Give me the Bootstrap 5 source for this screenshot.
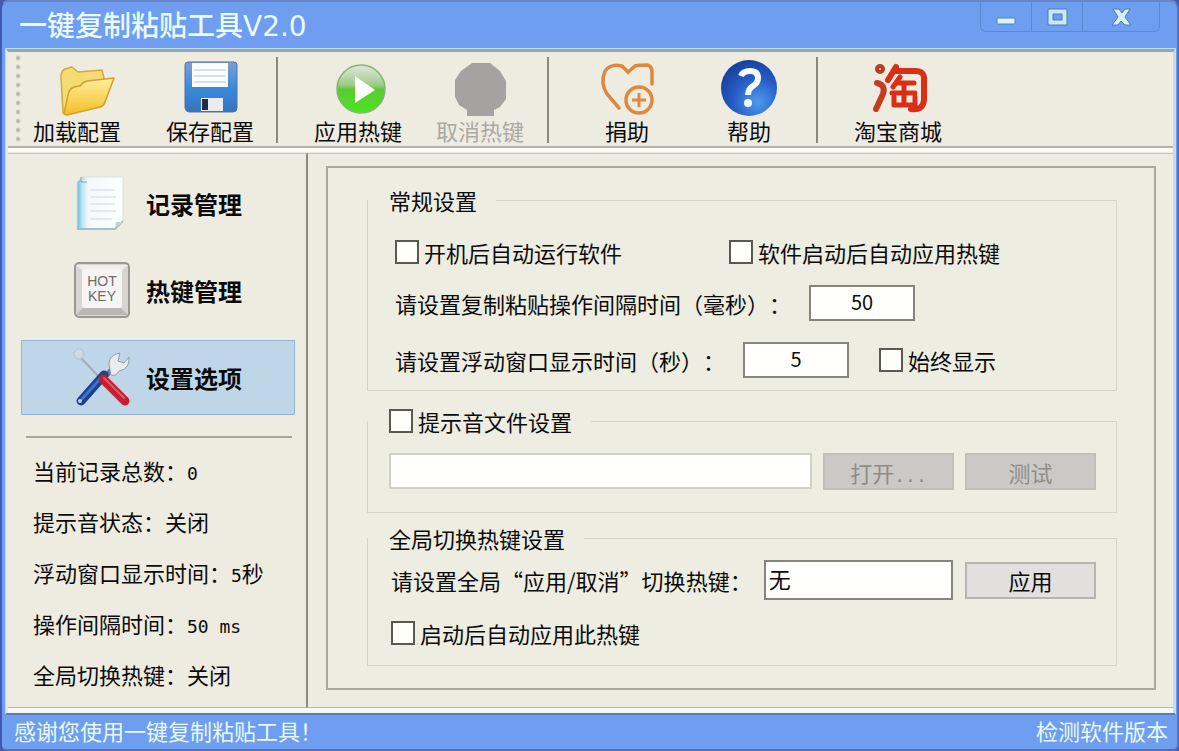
<!DOCTYPE html>
<html lang="zh-CN">
<head>
<meta charset="utf-8">
<meta name="viewport" content="width=device-width, initial-scale=1">
<title>一键复制粘贴工具V2.0</title>
<link rel="stylesheet" href="https://cdn.jsdelivr.net/npm/bootstrap@5.3.0/dist/css/bootstrap.min.css">
<style>
:root { --face: #eeece1; --blue: #6f9ef1; --line: #a3a298; --faint: #d6d6c8; }
body { background: #3f5fae; color: #0b0b0b; font-family: "Noto Sans CJK SC", "Liberation Sans", sans-serif; font-size: 22px; line-height: 28px; font-kerning: none; text-spacing-trim: space-all; }
.app-window { background: var(--blue); border: 2px solid #5470b4; border-left-color: #405ab0; border-top-color: #6686c8; border-radius: 8px 8px 6px 6px; padding: 0 2px 0 4px; }
.title-bar { height: 47px; }
.title-text { font: 500 28px/36px "DejaVu Sans", "Noto Sans CJK SC", sans-serif; color: #e9fbfb; margin: 7px 0 0 13px; }
.caption-box { height: 30px; margin-right: 15px; border: 1px solid #5d88cd; border-top: 0; border-radius: 0 0 6px 6px; }
.caption-box button { width: 51px; border: 0; border-right: 1px solid #5d88cd; background: none; padding: 0; line-height: 0; }
.caption-box button:last-child { width: 76px; border-right: 0; }
.client { background: var(--face); border: 2px solid #8ea6bb; border-top-width: 3px; border-left-color: #dfeafa; border-right-color: #c3dcec; border-bottom: 0; outline: 1px solid #c4ddf5; }
.tool-bar { height: 96px; border-bottom: 2px solid #b5b1a6; box-shadow: 0 4px 0 #fbfaf3; margin-bottom: 5px; }
.grip { width: 5px; margin: 3px 0 3px 8px; background: radial-gradient(circle at 2px 3px, #b9b6ae 1px, transparent 3px) 0 0 / 5px 9px; }
.tool-group { border-right: 2px solid #8b897f; margin: 5px 0 3px; padding: 0 6px 0 19px; }
.tool-group.tight { padding: 0 10px 0 0; gap: 21px; }
.tool-group:last-child { border-right: 0; }
.tool-item { width: 122px; border: 0; background: none; padding: 0; color: #0b0b0b; }
.tight .tool-item { width: 112px; }
.tool-item svg { display: block; width: 60px; height: 60px; margin: 0 auto; overflow: visible; }
.tool-item span { display: block; line-height: 24px; }
.tool-item:disabled { color: #aaa9a2; }
.side-bar { width: 300px; border-right: 2px solid #8d8a80; border-top: 1px solid #c8c4b8; padding: 12px 11px 0 13px; }
.side-link { height: 75px; padding-left: 50px; gap: 14px; border: 1px solid transparent; color: #0b0b0b; font-size: 24px; font-weight: 700; text-decoration: none; }
.side-link.active { background: #bfd6e9; border-color: #93b6d8; }
.side-link svg { width: 60px; height: 60px; flex: none; }
.side-rule { border: 0; border-top: 2px solid #aaa69c; opacity: 1; margin: 21px 3px 18px 5px; }
.stat-list { padding-left: 12px; gap: 23px; }
.stat-list > div { height: 28px; }
.num { font-family: "DejaVu Sans Mono", monospace; font-size: 18px; line-height: 20px; }
.main-area { border-top: 1px solid #c8c4b8; padding: 12px 17px 17px 18px; }
.pane { border: 2px solid #a8a89b; background: #edede1; padding: 18px 37px 21px 39px; }
.set-group { border: 1px solid var(--faint); padding: 0 20px 0 21px; min-width: 0; }
.set-group > legend { float: none; width: auto; margin: 0 0 0 -21px; padding: 0 19px 0 21px; font-size: 22px; line-height: 28px; }
.tick { appearance: none; width: 24px; height: 24px; margin: 0; flex: none; border: 2px solid #5a5950; background: #fffffa; }
.tick:checked { background: #5a5950; box-shadow: inset 0 0 0 4px #fffffa; }
.tick-label { display: flex; align-items: center; gap: 5px; line-height: 24px; }
.field { border: 2px solid #85857d; background: #fffffd; height: 36px; min-width: 0; padding: 0 4px 4px; color: #0b0b0b; border-radius: 0; }
.field.short { width: 106px; text-align: center; font-size: 20px; }
.field.soft { border-color: #d0d0c8; }
.field.tall { height: 40px; padding-left: 3px; }
.push { width: 131px; height: 37px; flex: none; border: 2px solid #b5b4b0; background: #e2e0df; padding: 0; line-height: 30px; color: #0b0b0b; }
.push:disabled { background: #cbc9c5; border-color: #c0bfba; color: #8d8c88; }
.two-ticks { display: grid; grid-template-columns: 334px 1fr; }
.status-bar { height: 36px; border-top: 2px solid #5c7cb5; color: #e6faf3; padding: 0 7px 0 8px; line-height: 30px; }
.status-bar a { color: inherit; text-decoration: none; }
.base-line { height: 6px; border-top: 1px solid #b9b5ab; background: #f7f7f5; }
</style>
</head>
<body>
<div class="app-window d-flex flex-column min-vh-100">
  <header class="title-bar d-flex justify-content-between align-items-start">
    <h1 class="title-text">一键复制粘贴工具V2.0</h1>
    <div class="caption-box d-flex">
      <button type="button" aria-label="最小化"><svg width="24" height="24"><rect x="3" y="13" width="18" height="6" rx="1" fill="#d8f5fb" stroke="#5584bd"/></svg></button>
      <button type="button" aria-label="最大化"><svg width="24" height="24"><path d="M3 4h19v16H3zM8 9v6h9V9z" fill="#c7eaf7" stroke="#4c7bb3" fill-rule="evenodd"/></svg></button>
      <button type="button" aria-label="关闭"><svg width="24" height="24"><path d="M4 4h6l3 4 3-4h5l-5 8 6 8h-6l-4-4-3 4H3l6-8z" fill="#d3f1fa" stroke="#4c7bb3"/></svg></button>
    </div>
  </header>

  <div class="client d-flex flex-column flex-grow-1">
    <nav class="tool-bar d-flex">
      <div class="grip"></div>
      <div class="tool-group tight d-flex">
        <button class="tool-item" type="button">
          <svg viewBox="-10 -3 60 60"><defs><linearGradient id="fo" x2="0" y2="1"><stop offset="0" stop-color="#fff0a0"/><stop offset="1" stop-color="#f3bf22"/></linearGradient></defs><path d="M6 52 4 16q0-6 4-8l7-2 6 5 24-2 2 8v22z" fill="#f5dc72" stroke="#d4a83b" stroke-width="1.5" stroke-linejoin="round"/><path d="M7 53 11 34q1-6 6-8l6-1q3-4 7-5l27-3-9 24q-1 4-5 5L10 54z" fill="url(#fo)" stroke="#cfa02d" stroke-width="1.5" stroke-linejoin="round"/></svg>
          <span>加载配置</span>
        </button>
        <button class="tool-item" type="button">
          <svg viewBox="0 0 60 60"><defs><linearGradient id="fl" x2="0" y2="1"><stop offset="0" stop-color="#7f9fd2"/><stop offset=".5" stop-color="#3a8bdc"/><stop offset="1" stop-color="#3475bd"/></linearGradient></defs><path d="M8 4h46q3 0 3 3v43q0 4-4 4H10q-5 0-5-5V7q0-3 3-3z" fill="url(#fl)" stroke="#566e9d"/><path d="M12 5h36v24H12z" fill="#fbfdfe"/><path d="M14 12h32M14 18h32M14 24h32" stroke="#d9e0e9" stroke-width="2"/><path d="M21 40h22v13H21z" fill="#e9edf0"/><path d="M22 41h6v11h-6z" fill="#222c3c"/></svg>
          <span>保存配置</span>
        </button>
      </div>
      <div class="tool-group d-flex">
        <button class="tool-item" type="button">
          <svg viewBox="0 0 60 60"><defs><linearGradient id="gr" x2="0" y2="1"><stop offset="0" stop-color="#e4e7dc"/><stop offset=".42" stop-color="#9ccc87"/><stop offset=".5" stop-color="#5ccb35"/><stop offset="1" stop-color="#48e51d"/></linearGradient></defs><circle cx="33" cy="31" r="24" fill="url(#gr)" stroke="#84b573" stroke-width="1.5"/><path d="M27 18v27l20-13z" fill="#fff"/></svg>
          <span>应用热键</span>
        </button>
        <button class="tool-item" type="button" disabled>
          <svg viewBox="0 0 60 60"><path d="M22 5h18l10 8 6 10v18l-6 8-6 3v6H17v-6l-8-5-4-8V22l6-9z" fill="#a4a3a1"/></svg>
          <span>取消热键</span>
        </button>
      </div>
      <div class="tool-group d-flex" style="padding-left:17px">
        <button class="tool-item" type="button">
          <svg viewBox="0 0 60 60" fill="none" stroke="#df873f" stroke-width="3.5"><path d="M22 50 10 36Q3 25 8 13 14 5 25 8L31 14 38 8Q42 7 50 7 55 8 55 14V26" stroke-linecap="round"/><circle cx="42" cy="42" r="13"/><path d="M42 35v14M35 42h14" stroke-width="3"/></svg>
          <span>捐助</span>
        </button>
        <button class="tool-item" type="button">
          <svg viewBox="0 0 60 60"><defs><radialGradient id="he" cx=".65" cy=".75" r=".8"><stop offset="0" stop-color="#4c9bee"/><stop offset=".55" stop-color="#245bc4"/><stop offset="1" stop-color="#173f9c"/></radialGradient></defs><circle cx="30" cy="30" r="28" fill="url(#he)"/><path d="M22 18Q24 13 31 13q8 0 8 7 0 5-5 8-5 3-5 9" fill="none" stroke="#f5fafc" stroke-width="6"/><circle cx="29" cy="45" r="4" fill="#f5fafc"/></svg>
          <span>帮助</span>
        </button>
      </div>
      <div class="tool-group d-flex">
        <button class="tool-item" type="button">
          <svg viewBox="-2 0 60 60" aria-hidden="true" fill="none" stroke="#dc2e17" stroke-width="6" stroke-linecap="round" stroke-linejoin="round"><circle cx="10" cy="11" r="2" stroke="#bd3b20"/><path d="M7 25q9 2 6 11L6 51" stroke="#c53b22"/><path d="M26 9 18 22M24 13h21q10 0 9 9v20q-1 11-13 9"/><path d="M30 19 23 29M27 25h17M22 35h23M34 26v21M24 39v8h21v-8" stroke-width="5"/></svg>
          <span>淘宝商城</span>
        </button>
      </div>
    </nav>

    <div class="d-flex flex-grow-1">
      <aside class="side-bar flex-shrink-0">
        <nav class="d-flex flex-column" style="gap:12px">
          <a class="side-link d-flex align-items-center" href="#records">
            <svg viewBox="0 0 60 60"><defs><linearGradient id="pg"><stop offset="0" stop-color="#69badb"/><stop offset=".12" stop-color="#bce8f2"/><stop offset=".25" stop-color="#f4f8fd"/><stop offset="1" stop-color="#fff"/></linearGradient></defs><path d="M5 8 10 3h41v44l-8 8H5z" fill="url(#pg)" stroke="#d5e1e4"/><path d="M5 55h38l8-8" fill="none" stroke="#8db4c3" stroke-width="1.5"/><path d="m43 54 1-6h7z" fill="#c6d3d5"/><path d="M18 16h25M18 23h26M18 30h25M18 37h26M18 45h22" stroke="#e3e8f2" stroke-width="2"/><path d="M9 3v5h6" fill="none" stroke="#8aa0a5"/></svg>
            <span>记录管理</span>
          </a>
          <a class="side-link d-flex align-items-center" href="#hotkeys">
            <svg viewBox="0 0 60 60"><rect x="3" y="2" width="54" height="54" rx="4" fill="#d6d5d1" stroke="#999893" stroke-width="2"/><path d="m4 4 8 7h36l8-7z" fill="#efeeeb"/><path d="m4 54 8-8h36l8 8z" fill="#b9b8b4"/><rect x="10" y="8" width="40" height="39" rx="2" fill="#f6f5f3"/><g font-family="Liberation Sans" font-weight="400" font-size="14" fill="#6c6c6c" text-anchor="middle"><text x="30" y="25">HOT</text><text x="30" y="40">KEY</text></g></svg>
            <span>热键管理</span>
          </a>
          <a class="side-link active d-flex align-items-center" href="#options" aria-current="page">
            <svg viewBox="0 0 60 60" stroke-linecap="round"><path d="m6 7 24 25" stroke="#9fafbb" stroke-width="2"/><circle cx="7" cy="6" r="5" fill="#ccdbe6" stroke="#b3c3cf"/><path d="m32 30 11-12" stroke="#697485" stroke-width="5"/><path d="M37 15q0-8 11-10l-2 8 6 2 5-6q1 12-10 14-3 6-8 4z" fill="#e8ecec" stroke="#8d9da6"/><path d="M32 27 9 53" stroke="#1e408d" stroke-width="9"/><path d="M28 31 10 51" stroke="#3d73cb" stroke-width="3"/><circle cx="8" cy="53" r="2" fill="#b8d0e6"/><path d="m31 31 22 22" stroke="#c21f30" stroke-width="9"/><path d="m32 30 20 20" stroke="#f15360" stroke-width="2"/></svg>
            <span>设置选项</span>
          </a>
        </nav>
        <hr class="side-rule">
        <div class="stat-list d-flex flex-column">
          <div>当前记录总数：<span class="num">0</span></div>
          <div>提示音状态：关闭</div>
          <div>浮动窗口显示时间：<span class="num">5</span>秒</div>
          <div>操作间隔时间：<span class="num">50 ms</span></div>
          <div>全局切换热键：关闭</div>
        </div>
      </aside>

      <main class="main-area flex-grow-1 d-flex flex-column">
        <form class="pane flex-grow-1">
          <fieldset class="set-group" style="margin-bottom:18px">
            <legend>常规设置</legend>
            <div class="d-flex flex-column" style="gap:21px;padding:26px 0 12px 6px">
              <div class="two-ticks">
                <label class="tick-label"><input class="tick" type="checkbox">开机后自动运行软件</label>
                <label class="tick-label"><input class="tick" type="checkbox">软件启动后自动应用热键</label>
              </div>
              <div class="d-flex align-items-center" style="gap:18px">
                <label for="delay">请设置复制粘贴操作间隔时间（毫秒）：</label>
                <input class="field short" id="delay" type="text" value="50">
              </div>
              <div class="d-flex align-items-center" style="gap:18px">
                <label for="float">请设置浮动窗口显示时间（秒）：</label>
                <input class="field short" id="float" type="text" value="5">
                <label class="tick-label ms-2 ps-1"><input class="tick" type="checkbox">始终显示</label>
              </div>
            </div>
          </fieldset>
          <fieldset class="set-group" style="margin-bottom:11px">
            <legend><label class="tick-label"><input class="tick" type="checkbox">提示音文件设置</label></legend>
            <div class="d-flex" style="gap:11px;padding:20px 0 22px">
              <input class="field soft flex-grow-1" type="text" aria-label="提示音文件" disabled>
              <button class="push" type="button" disabled>打开<span class="num">...</span></button>
              <button class="push" type="button" disabled>测试</button>
            </div>
          </fieldset>
          <fieldset class="set-group">
            <legend>全局切换热键设置</legend>
            <div class="d-flex align-items-center" style="gap:12px;padding:8px 0 21px 2px">
              <label class="flex-shrink-0" for="hot">请设置全局“应用/取消”切换热键：</label>
              <input class="field tall flex-grow-1" id="hot" type="text" value="无">
              <button class="push" type="button">应用</button>
            </div>
            <div style="padding:0 0 20px 2px"><label class="tick-label"><input class="tick" type="checkbox">启动后自动应用此热键</label></div>
          </fieldset>
        </form>
      </main>
    </div>
    <div class="base-line"></div>
  </div>

  <footer class="status-bar d-flex justify-content-between">
    <span>感谢您使用一键复制粘贴工具！</span>
    <a href="#version">检测软件版本</a>
  </footer>
</div>
<script src="https://cdn.jsdelivr.net/npm/bootstrap@5.3.0/dist/js/bootstrap.bundle.min.js"></script>
</body>
</html>
